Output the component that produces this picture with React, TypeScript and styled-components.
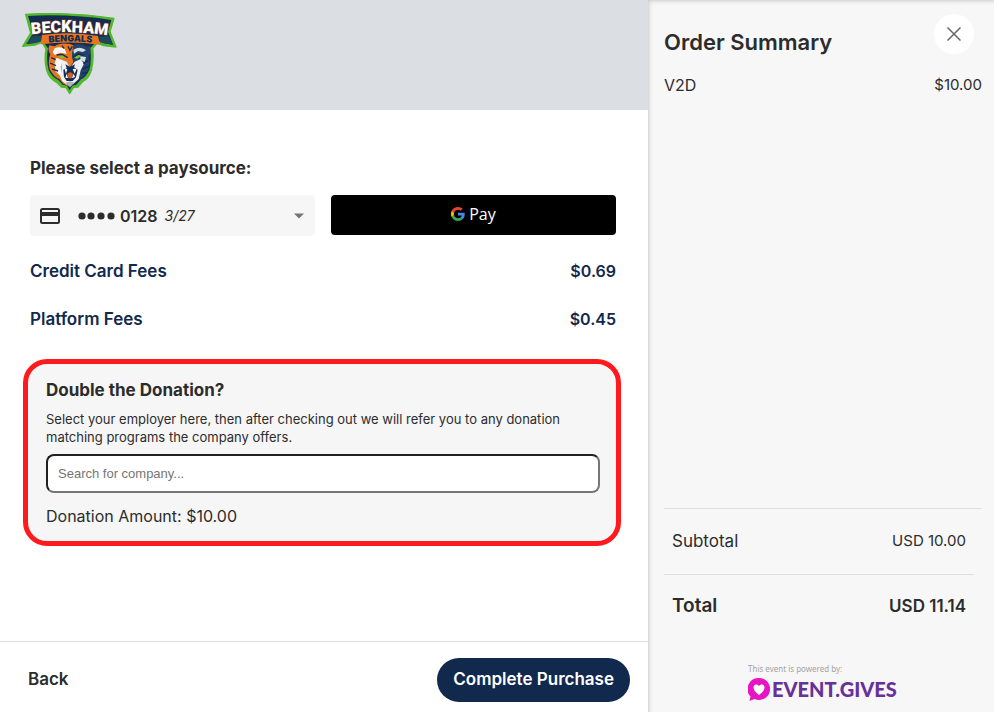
import React from "react";
import styled, { createGlobalStyle } from "styled-components";

const GlobalStyle = createGlobalStyle`
  *, *::before, *::after { box-sizing: border-box; }
  body {
    margin: 0;
    background: #fff;
    color: #2c2c2c;
    font-family: Inter, sans-serif;
    font-size: 16px;
    line-height: 24px;
  }
  h1, h2, p { margin: 0; padding: 0; }
  button, select, input { font: inherit; color: inherit; }
`;

const Page = styled.div`
  display: grid;
  grid-template-columns: minmax(0, 1fr) 346px;
  min-height: 100vh;
`;

const Checkout = styled.main`
  display: flex;
  flex-direction: column;
`;

const Banner = styled.header`
  display: flex;
  align-items: flex-start;
  height: 110px;
  padding: 13px 22px;
  background: #dbdee3;
`;

const Content = styled.div`
  flex: 1;
  padding: 46px 32px 24px 30px;
`;

const Heading = styled.h2`
  display: block;
  font-size: 17px;
  line-height: 24px;
  font-weight: 700;
`;

const PayRow = styled.div`
  display: grid;
  grid-template-columns: 1fr 1fr;
  align-items: start;
  gap: 16px;
  margin: 15px 0 11px;
`;

const CardPicker = styled.label`
  position: relative;
  display: flex;
  align-items: center;
  height: 41px;
  padding: 0 10px;
  border-radius: 4px;
  background: #f6f6f6;
`;

const CardSelect = styled.select`
  position: absolute;
  inset: 0;
  width: 100%;
  border: 0;
  border-radius: 4px;
  opacity: 0;
  cursor: pointer;
`;

const CardNumber = styled.span`
  display: flex;
  align-items: center;
  gap: 5px;
  margin: 0 7px 0 18px;
  font-weight: 600;
`;

const Expiry = styled.em`
  flex: 1;
  font-size: 14px;
`;

const GooglePay = styled.button`
  display: flex;
  align-items: center;
  justify-content: center;
  gap: 4px;
  height: 40px;
  padding: 0 0 2px;
  border: 0;
  border-radius: 4px;
  background: #000;
  color: #fff;
  font-family: "Open Sans", sans-serif;
  font-size: 16px;
  cursor: pointer;
`;

const Line = styled.div<{ $bold?: boolean }>`
  display: flex;
  justify-content: space-between;
  font-weight: ${(p) => (p.$bold ? 600 : 400)};
`;

const Label = styled.span<{ $size?: number }>`
  font-size: ${(p) => p.$size ?? 17}px;
`;

const Price = styled.span<{ $size?: number }>`
  font-size: ${(p) => p.$size ?? 15}px;
`;

const FeeLine = styled(Line)`
  padding: 12px 0;
  color: #11294d;
`;

const Match = styled.section`
  margin: 16px -5px 0 -7px;
  padding: 14px 16px 13px 18px;
  border: 5px solid #ff1a1e;
  border-radius: 24px;
  background: #f6f6f6;
`;

const Hint = styled.p`
  max-width: 540px;
  margin: 8px 0;
  font-size: 13px;
  line-height: 18px;
`;

const Search = styled.input`
  display: block;
  width: 100%;
  height: 39px;
  padding: 0 10px;
  border: 2px inset #767676;
  border-radius: 8px;
  background: #fff;
  font-family: "Liberation Sans", sans-serif;
  font-size: 13px;
  &::placeholder { color: #757575; }
`;

const Amount = styled.p`
  margin-top: 11px;
`;

const Footer = styled.footer`
  display: flex;
  align-items: center;
  justify-content: space-between;
  padding: 16px 18px 10px 28px;
  border-top: 1px solid #dedede;
`;

const BackButton = styled.button`
  padding: 0 0 2px;
  border: 0;
  background: none;
  font-size: 17px;
  font-weight: 600;
  cursor: pointer;
`;

const Purchase = styled.button`
  height: 44px;
  padding: 0 16px 2px;
  border: 0;
  border-radius: 22px;
  background: #11294d;
  color: #fff;
  font-size: 17px;
  font-weight: 600;
  cursor: pointer;
`;

const Summary = styled.aside`
  display: flex;
  flex-direction: column;
  padding: 14px 12px 9px 16px;
  background: #f7f7f7;
  box-shadow: inset 3px 3px 5px -3px rgba(0, 0, 0, 0.25);
`;

const SummaryTop = styled.div`
  display: flex;
  justify-content: space-between;
  margin-bottom: 19px;
  padding-right: 8px;
`;

const Title = styled.h1`
  padding-top: 16px;
  font-size: 22px;
  line-height: 24px;
  font-weight: 600;
`;

const Close = styled.button`
  display: grid;
  place-items: center;
  width: 40px;
  height: 40px;
  padding: 0;
  border: 0;
  border-radius: 50%;
  background: #fff;
  cursor: pointer;
`;

const Totals = styled.div`
  margin-top: auto;
  border-top: 1px solid #dedede;
`;

const SubtotalLine = styled(Line)`
  margin-right: 8px;
  padding: 20px 8px 21px;
  border-bottom: 1px solid #dedede;
`;

const TotalLine = styled(Line)`
  margin-right: 8px;
  padding: 19px 8px;
`;

const Powered = styled.a`
  align-self: center;
  width: 150px;
  margin-top: 26px;
  color: #a3a3a3;
  font-family: "Noto Sans", sans-serif;
  font-size: 8px;
  line-height: 12px;
  text-decoration: none;
`;

const Brand = styled.span`
  display: flex;
  align-items: center;
  gap: 2px;
  height: 28px;
  color: #68309a;
  font-family: Lato, sans-serif;
  font-size: 20px;
  line-height: 28px;
  font-weight: 900;
  svg { flex: none; }
`;

const TeamLogo = () => (
  <svg width="95" height="82" viewBox="36 24 285 246" role="img" aria-label="Beckham Bengals">
    <path
      d="M47 28Q180 20 312 40L300 80L318 126L280 122L262 114L248 130Q252 165 244 196Q236 222 218 230L204 246L190 248L179 266L168 248L154 246L140 232Q118 222 110 196Q102 165 108 132L96 112L76 120L38 124L62 84Z"
      fill="#52b82c" stroke="#52b82c" strokeWidth="4" strokeLinejoin="round"
    />
    <path
      d="M54 33Q180 26 304 45L294 80L309 119L282 115L264 106L240 130Q246 165 238 194Q230 214 213 223L199 239L187 242L179 256L171 242L158 239L146 226Q124 214 116 194Q108 165 114 130L96 106L76 114L49 117L70 84Z"
      fill="#142c50"
    />
    <path d="M49 117L68 92L94 93L92 110L76 114ZM309 119L296 94L268 96L270 112L282 115Z" fill="#1f4a5e" />
    <path d="M96 90Q180 78 264 93L270 119Q180 107 92 118Z" fill="#e87522" />
    <path id="arch" d="M58 89Q180 73 300 92" fill="none" />
    <path id="lower" d="M94 115Q180 103 268 116" fill="none" />
    <text fontFamily="Roboto, sans-serif" fontWeight="900" fontSize="48" fill="#fff" stroke="#8b4723" strokeWidth="3" paintOrder="stroke" textAnchor="middle">
      <textPath href="#arch" startOffset="50%">BECKHAM</textPath>
    </text>
    <text fontFamily="Inter, sans-serif" fontWeight="900" fontSize="27" fill="#142c50" textAnchor="middle">
      <textPath href="#lower" startOffset="50%">BENGALS</textPath>
    </text>
    <path d="M180 117Q150 112 134 124L118 121Q112 136 121 148Q112 174 120 194Q132 216 148 222L160 236L180 246Z" fill="#e87522" />
    <path d="M180 117L198 124L186 146L190 172L180 186Z" fill="#e87522" />
    <path d="M190 120Q212 112 228 124L240 124Q244 142 236 154Q242 184 232 202Q220 218 208 222L196 236L182 244L190 176L186 148Z" fill="#24426b" />
    <path d="M134 130Q150 122 164 132L170 146L150 143L134 150L128 142ZM140 158L158 166L152 186L158 214L172 240L156 228L150 212L136 198L134 174Z" fill="#f6f7f8" />
    <path d="M154 164L170 170L180 188L194 170L212 162L222 176L212 196L206 222L190 236L180 230L166 234L156 210Z" fill="#eef1f4" />
    <path d="M190 134Q212 122 228 136L218 141L204 138L192 146ZM210 154L228 156L224 172L212 164Z" fill="#d5dde6" />
    <path d="M146 154L157 151L168 158L155 160ZM190 158L206 149L214 153L202 161Z" fill="#72c62f" />
    <path d="M140 150L157 148L173 158M188 158L205 147L222 150M124 158L136 164M120 174L138 182M126 192L144 198M156 122L162 130M234 166L220 176M236 184L218 192M230 202L216 206M174 124L180 136L187 124" fill="none" stroke="#142c50" strokeWidth="4" />
    <path d="M166 178L180 185L195 178L192 187L203 194L198 217L188 228L170 228L162 216L160 194L170 188Z" fill="#142c50" />
    <path d="M172 206Q180 197 189 206L187 220L175 220Z" fill="#c9622b" />
    <path d="M163 190L168 206L172 192ZM188 192L194 206L200 191ZM166 218L170 206L174 219ZM186 219L191 206L195 216Z" fill="#fff" />
    <path d="M168 233L180 229L193 233L180 247Z" fill="#a7b5c4" />
  </svg>
);

const CardIcon = () => (
  <svg width="20" height="16" viewBox="0 0 20 16" aria-hidden="true">
    <rect x="1" y="1" width="18" height="14" rx="1.5" fill="none" stroke="#2c2c2c" strokeWidth="2" />
    <path d="M1 4h18v4H1z" fill="#2c2c2c" />
  </svg>
);

const Dots = () => (
  <svg width="37" height="8" viewBox="0 0 37 8" role="img" aria-label="Card ending in">
    {[4, 13, 23, 33].map((x) => (
      <circle key={x} cx={x} cy="4" r="3.6" fill="#2c2c2c" />
    ))}
  </svg>
);

const Caret = () => (
  <svg width="12" height="6" viewBox="0 0 12 6" aria-hidden="true">
    <path d="M1 0.5h10L6 5.5z" fill="#757575" />
  </svg>
);

const GoogleMark = () => (
  <svg width="14" height="14" viewBox="0 0 48 48" aria-hidden="true">
    <path fill="#ea4335" d="M24 9.5c3.5 0 6.7 1.2 9.2 3.6l6.9-6.9C35.9 2.4 30.5 0 24 0 14.6 0 6.5 5.4 2.6 13.2l8 6.2C12.4 13.7 17.7 9.5 24 9.5z" />
    <path fill="#4285f4" d="M47 24.6c0-1.6-.2-3.1-.4-4.6H24v9h12.900c-.6 3-2.200 5.500-4.700 7.200l7.700 6C44.400 38 47 31.800 47 24.600z" />
    <path fill="#fbbc05" d="M10.500 28.600a14.500 14.500 0 0 1 0-9.200l-7.900-6.200a24 24 0 0 0 0 21.600z" />
    <path fill="#34a853" d="M24 48c6.500 0 11.900-2.100 15.900-5.800l-7.700-6c-2.200 1.500-4.900 2.300-8.200 2.300-6.300 0-11.600-4.200-13.500-9.900l-7.900 6.200C6.500 42.600 14.600 48 24 48z" />
  </svg>
);

const CloseIcon = () => (
  <svg width="14" height="14" viewBox="0 0 14 14" aria-hidden="true">
    <path d="M.5.5l13 13M13.5.5l-13 13" stroke="#666" strokeWidth="1.5" />
  </svg>
);

const HeartBubble = () => (
  <svg width="22" height="23" viewBox="0 0 22 23" aria-hidden="true">
    <path d="M11 0a11 11 0 1 1-4.500 21L1.500 23l1-4.500A11 11 0 0 1 11 0z" fill="#e815c3" />
    <path d="M11 17C8 14.500 5.500 12.500 5.500 9.500 5.500 6 9.500 5.500 11 8c1.500-2.500 5.500-2 5.500 1.500 0 3-2.500 5-5.500 7.500z" fill="#fff" />
  </svg>
);

export default function App() {
  return (
    <>
      <GlobalStyle />
      <Page>
        <Checkout>
          <Banner>
            <TeamLogo />
          </Banner>
          <Content>
            <Heading>Please select a paysource:</Heading>
            <PayRow>
              <CardPicker>
                <CardIcon />
                <CardNumber>
                  <Dots />
                  0128
                </CardNumber>
                <Expiry>3/27</Expiry>
                <Caret />
                <CardSelect aria-label="Paysource">
                  <option>•••• 0128 3/27</option>
                </CardSelect>
              </CardPicker>
              <GooglePay type="button" aria-label="Google Pay">
                <GoogleMark />
                Pay
              </GooglePay>
            </PayRow>
            <FeeLine $bold>
              <Label>Credit Card Fees</Label>
              <Price $size={16}>$0.69</Price>
            </FeeLine>
            <FeeLine $bold>
              <Label>Platform Fees</Label>
              <Price $size={16}>$0.45</Price>
            </FeeLine>
            <Match>
              <Heading as="label" htmlFor="company">Double the Donation?</Heading>
              <Hint>
                Select your employer here, then after checking out we will refer you to any donation
                matching programs the company offers.
              </Hint>
              <Search id="company" type="text" placeholder="Search for company..." />
              <Amount>Donation Amount: $10.00</Amount>
            </Match>
          </Content>
          <Footer>
            <BackButton type="button">Back</BackButton>
            <Purchase type="button">Complete Purchase</Purchase>
          </Footer>
        </Checkout>
        <Summary>
          <SummaryTop>
            <Title>Order Summary</Title>
            <Close type="button" aria-label="Close">
              <CloseIcon />
            </Close>
          </SummaryTop>
          <Line>
            <Label $size={16}>V2D</Label>
            <Price>$10.00</Price>
          </Line>
          <Totals>
            <SubtotalLine>
              <Label>Subtotal</Label>
              <Price>USD 10.00</Price>
            </SubtotalLine>
            <TotalLine $bold>
              <Label $size={19}>Total</Label>
              <Price $size={17}>USD 11.14</Price>
            </TotalLine>
          </Totals>
          <Powered href="#">
            This event is powered by:
            <Brand>
              <HeartBubble />
              EVENT.GIVES
            </Brand>
          </Powered>
        </Summary>
      </Page>
    </>
  );
}
